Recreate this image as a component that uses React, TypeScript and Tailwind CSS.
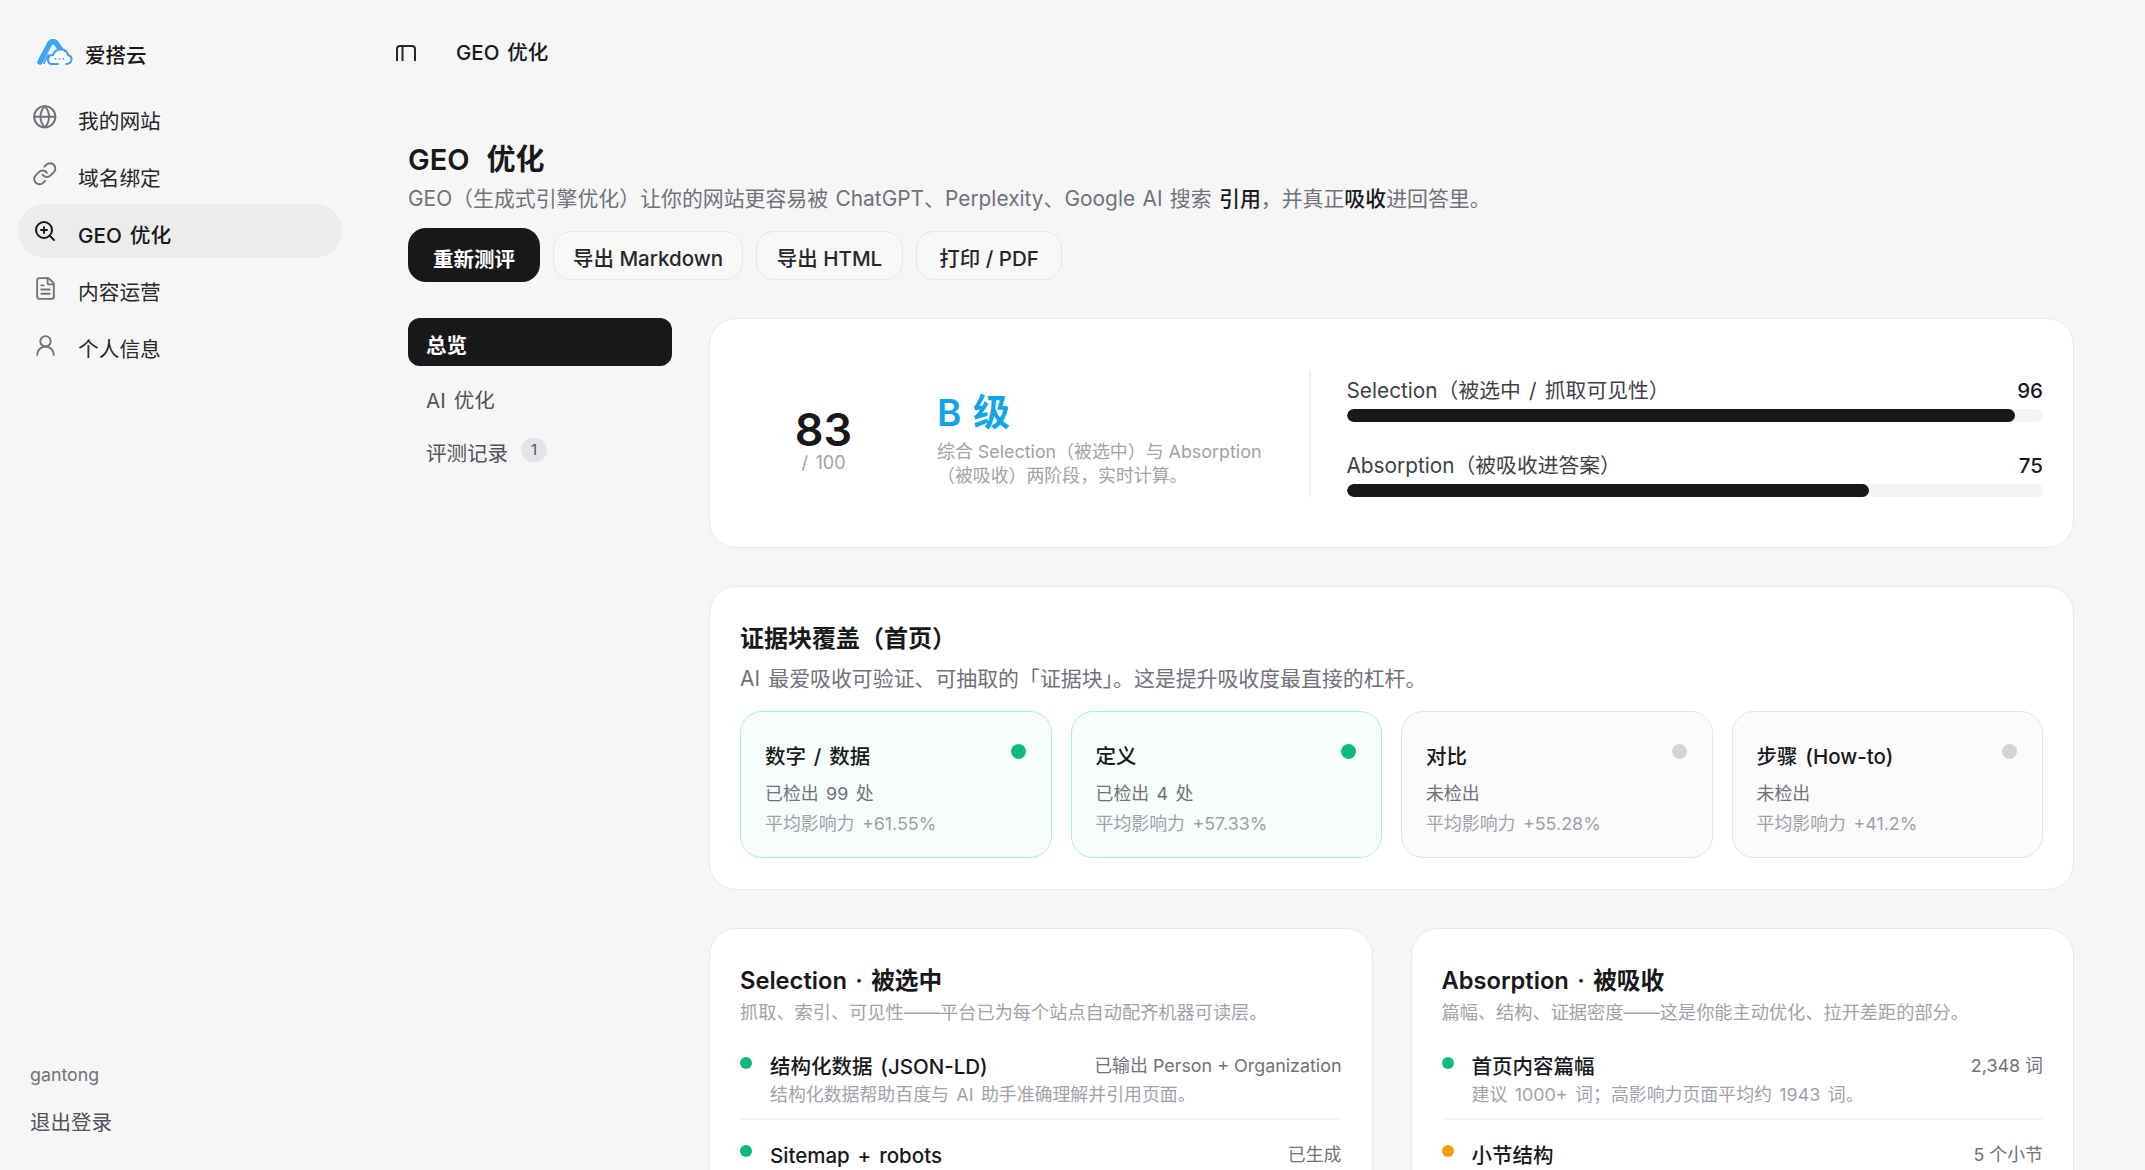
import { Globe, Link, ZoomIn, FileText, UserRound } from "lucide-react";

const nav = [
  { label: "我的网站", Icon: Globe, size: 25.5 },
  { label: "域名绑定", Icon: Link, size: 25.5 },
  { label: "GEO 优化", Icon: ZoomIn, size: 24, active: true },
  { label: "内容运营", Icon: FileText, size: 25 },
  { label: "个人信息", Icon: UserRound, size: 25 },
];

function Logo() {
  return (
    <svg width="36" height="28" viewBox="0 0 36 28" fill="none" className="shrink-0">
      <defs>
        <linearGradient id="lg" x1="0" y1="28" x2="22" y2="0">
          <stop offset="0" stopColor="#3b82f6" />
          <stop offset="1" stopColor="#38bdf8" />
        </linearGradient>
      </defs>
      <path d="M3 23 L13 4 Q16 1 19 4 L24 11" stroke="url(#lg)" strokeWidth="5.5" strokeLinecap="round" strokeLinejoin="round" />
      <path d="M11 16 L7 24" stroke="#60a5fa" strokeWidth="2" strokeLinecap="round" />
      <path d="M21 25 H15 Q11 25 11 20.5 Q11 16 16 16 Q18 10 24.500 10.500 Q30 11 31 16 Q35 17 34.500 21 Q34 25 29 25" fill="#ffffff" stroke="#3b9cf5" strokeWidth="2" strokeLinecap="round" />
      <circle cx="18.500" cy="20" r="1" fill="#60a5fa" />
      <circle cx="22.500" cy="20" r="1" fill="#60a5fa" />
      <circle cx="26.500" cy="20" r="1" fill="#60a5fa" />
    </svg>
  );
}

function Bar({ label, value }: { label: string; value: number }) {
  return (
    <div className="flex flex-col">
      <div className="flex items-center justify-between h-[28px] leading-[28px]">
        <span className="text-[20.8px] text-[#3f3f46]">{label}</span>
        <span className="text-[20.5px] font-medium text-[#18181b]">{value}</span>
      </div>
      <div className="mt-[4px] h-[13px] rounded-full bg-[#f4f4f5] overflow-hidden">
        <div className="h-full rounded-full bg-[#18181b]" style={{ width: `${value}%` }} />
      </div>
    </div>
  );
}

function Evidence({ title, line, impact, on }: { title: string; line: string; impact: string; on?: boolean }) {
  return (
    <div className={`relative h-[147px] rounded-[22px] border-[1.5px] px-[24px] pt-[31px] ${on ? "border-[#a7f3d0] bg-[#f7fdfb]" : "border-[#e4e4e7] bg-[#fbfbfb]"}`}>
      <span className={`absolute right-[25px] top-[32px] h-[15px] w-[15px] rounded-full ${on ? "bg-[#10b981]" : "bg-[#d4d4d8]"}`} />
      <div className="text-[20.5px] leading-[28px] font-medium text-[#18181b]">{title}</div>
      <div className="mt-[10px] text-[17.9px] leading-[26px] text-[#71717a]">{line}</div>
      <div className="mt-[4px] text-[17.9px] leading-[26px] text-[#a1a1aa]">{impact}</div>
    </div>
  );
}

function Row({ title, right, desc, dot }: { title: string; right: string; desc?: string; dot: string }) {
  return (
    <div className="flex gap-[18px]">
      <span className={`mt-[4.5px] h-[12px] w-[12px] shrink-0 rounded-full ${dot}`} />
      <div className="flex-1 min-w-0">
        <div className="flex items-start justify-between h-[30px]">
          <span className="text-[20.5px] leading-[30px] font-medium text-[#18181b]">{title}</span>
          <span className="text-[17.9px] leading-[28px] text-[#71717a] [word-spacing:0]">{right}</span>
        </div>
        {desc && <div className="text-[17.9px] leading-[26px] text-[#a1a1aa]">{desc}</div>}
      </div>
    </div>
  );
}

function ColumnCard({ title, sub, children }: { title: string; sub: string; children: React.ReactNode }) {
  return (
    <div className="flex-1 min-w-0 h-[300px] rounded-t-[27px] border-[1.5px] border-[#e8e8e8] bg-white px-[30px] pt-[36px]">
      <div className="text-[23.7px] leading-[32px] font-semibold text-[#18181b]">{title}</div>
      <div className="mt-[2px] text-[18.2px] leading-[26px] text-[#a1a1aa]">{sub}</div>
      <div className="mt-[27px]">{children}</div>
    </div>
  );
}

export default function App() {
  return (
    <div className="flex h-[1170px] w-full overflow-hidden bg-[#f6f6f6] text-[#18181b] [font-family:Inter,'Noto_Sans_CJK_SC',sans-serif] [word-spacing:0.15em]">
      <aside className="flex w-[360px] shrink-0 flex-col pl-[18px] pr-[18px] pt-[36px] pb-[32px]">
        <div className="flex h-[34px] items-center gap-[12px] pl-[19px]">
          <Logo />
          <span className="text-[20.5px] pt-[5px] font-medium leading-[28px]">爱搭云</span>
        </div>
        <nav className="mt-[20px] flex flex-col gap-[3px]">
          {nav.map(({ label, Icon, size, active }) => (
            <div key={label} className={`flex h-[54px] items-center gap-[22px] rounded-full pl-[16px] ${active ? "bg-[#ececec]" : ""}`}>
              <span className="flex w-[22px] justify-center">
                <Icon size={size} strokeWidth={active ? 2 : 1.8} className={`shrink-0 ${active ? "text-[#18181b]" : "text-[#71717a]"}`} />
              </span>
              <span className={`pt-[9px] text-[20.7px] leading-[28px] ${active ? "font-medium text-[#18181b]" : "text-[#27272a]"}`}>{label}</span>
            </div>
          ))}
        </nav>
        <div className="mt-auto pl-[12px]">
          <div className="text-[17.8px] leading-[26px] text-[#71717a]">gantong</div>
          <div className="mt-[20px] text-[20.5px] leading-[30px] text-[#52525b]">退出登录</div>
        </div>
      </aside>

      <main className="flex-1 min-w-0 pr-[71px]">
        <header className="flex h-[104px] items-start pt-[38px] pl-[36px]">
          <svg width="20" height="16" viewBox="0 0 20 16" fill="none" className="mt-[7px]" stroke="#27272a" strokeWidth="2">
            <path d="M1 16 V4 Q1 1 4 1 H16 Q19 1 19 4 V16 M6.500 1 V16" />
          </svg>
          <span className="ml-[40px] pt-[1px] text-[20.5px] leading-[28px] font-medium">GEO 优化</span>
        </header>

        <div className="pl-[48px]">
          <h1 className="mt-[36px] text-[29px] leading-[40px] font-semibold [word-spacing:0.33em]">GEO 优化</h1>
          <p className="mt-[4px] text-[20.9px] leading-[30px] text-[#71717a] [word-spacing:0.07em]">
            GEO（生成式引擎优化）让你的网站更容易被 ChatGPT、Perplexity、Google AI 搜索 <b className="font-medium text-[#18181b]">引用</b>，并真正<b className="font-medium text-[#18181b]">吸收</b>进回答里。
          </p>

          <div className="mt-[14px] flex items-center gap-[13px]">
            <button className="flex h-[54px] w-[132px] items-center justify-center rounded-[18px] bg-[#18181b] pt-[10px] text-[20.5px] font-semibold text-white">重新测评</button>
            {[
              { t: "导出 Markdown", w: "w-[190px]" },
              { t: "导出 HTML", w: "w-[147px]" },
              { t: "打印 / PDF", w: "w-[146px]" },
            ].map(({ t, w }) => (
              <button key={t} className={`flex h-[49px] items-center justify-center rounded-[18px] border-[1.5px] border-[#e6e6e6] bg-[#f8f8f8] pt-[8px] text-[20.5px] font-medium text-[#27272a] ${w}`}>{t}</button>
            ))}
          </div>

          <div className="mt-[36px] flex gap-[37px]">
            <div className="w-[264px] shrink-0">
              <div className="flex h-[48px] items-center rounded-[12px] bg-[#18181b] px-[18px] pt-[8px] text-[20.5px] font-semibold text-white">总览</div>
              <div className="mt-[19px] px-[18px] text-[20.5px] leading-[32px] text-[#52525b]">AI 优化</div>
              <div className="mt-[21px] flex items-start gap-[13px] px-[18px]">
                <span className="text-[20.5px] leading-[32px] text-[#52525b]">评测记录</span>
                <span className="flex h-[24px] w-[26px] items-center justify-center rounded-full bg-[#e4e4e7] text-[15px] text-[#52525b]">1</span>
              </div>
            </div>

            <div className="flex-1 min-w-0">
              <section className="flex h-[230px] items-center rounded-[27px] border-[1.5px] border-[#e8e8e8] bg-white pl-[30px] pr-[30px]">
                <div className="flex w-[167px] shrink-0 flex-col items-center pt-[14px]">
                  <div className="text-[45px] leading-[44px] font-semibold">83</div>
                  <div className="mt-[1px] text-[18px] leading-[20px] text-[#a1a1aa]">/ 100</div>
                </div>
                <div className="ml-[30px] w-[332px] shrink-0 pt-[12px]">
                  <div className="text-[37px] leading-[46px] font-semibold text-[#0ea5e9]">B 级</div>
                  <div className="mt-[4px] text-[17.9px] leading-[24px] text-[#a1a1aa] [word-spacing:0]">综合 Selection（被选中）与 Absorption（被吸收）两阶段，实时计算。</div>
                </div>
                <div className="ml-[40px] h-[127px] w-[1.5px] shrink-0 bg-[#f0f0f0]" />
                <div className="ml-[36px] flex min-w-0 flex-1 flex-col gap-[30px] pt-[7px]">
                  <Bar label="Selection（被选中 / 抓取可见性）" value={96} />
                  <Bar label="Absorption（被吸收进答案）" value={75} />
                </div>
              </section>

              <section className="mt-[38px] h-[304px] rounded-[27px] border-[1.5px] border-[#e8e8e8] bg-white px-[30px] pt-[36px]">
                <div className="text-[24px] leading-[32px] font-semibold">证据块覆盖（首页）</div>
                <div className="mt-[9px] text-[20.9px] leading-[30px] text-[#71717a]">AI 最爱吸收可验证、可抽取的「证据块」。这是提升吸收度最直接的杠杆。</div>
                <div className="mt-[17px] grid grid-cols-4 gap-[19px]">
                  <Evidence on title="数字 / 数据" line="已检出 99 处" impact="平均影响力 +61.55%" />
                  <Evidence on title="定义" line="已检出 4 处" impact="平均影响力 +57.33%" />
                  <Evidence title="对比" line="未检出" impact="平均影响力 +55.28%" />
                  <Evidence title="步骤 (How-to)" line="未检出" impact="平均影响力 +41.2%" />
                </div>
              </section>

              <div className="mt-[38px] flex gap-[38px]">
                <ColumnCard title="Selection · 被选中" sub="抓取、索引、可见性——平台已为每个站点自动配齐机器可读层。">
                  <Row dot="bg-[#10b981]" title="结构化数据 (JSON-LD)" right="已输出 Person + Organization" desc="结构化数据帮助百度与 AI 助手准确理解并引用页面。" />
                  <div className="mt-[10px] mb-[21px] h-[1.5px] bg-[#f4f4f5]" />
                  <Row dot="bg-[#10b981]" title="Sitemap + robots" right="已生成" />
                </ColumnCard>
                <ColumnCard title="Absorption · 被吸收" sub="篇幅、结构、证据密度——这是你能主动优化、拉开差距的部分。">
                  <Row dot="bg-[#10b981]" title="首页内容篇幅" right="2,348 词" desc="建议 1000+ 词；高影响力页面平均约 1943 词。" />
                  <div className="mt-[10px] mb-[21px] h-[1.5px] bg-[#f4f4f5]" />
                  <Row dot="bg-[#f59e0b]" title="小节结构" right="5 个小节" />
                </ColumnCard>
              </div>
            </div>
          </div>
        </div>
      </main>
    </div>
  );
}
